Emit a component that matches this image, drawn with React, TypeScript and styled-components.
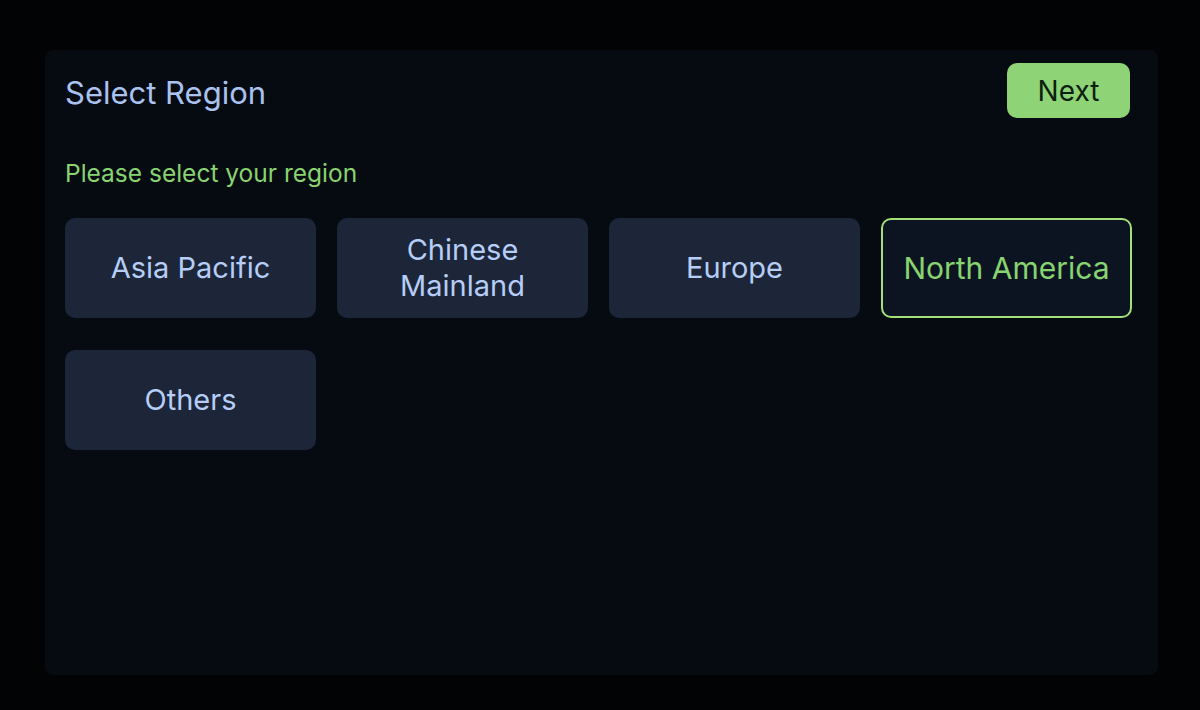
import React, { useState } from "react";
import styled, { createGlobalStyle } from "styled-components";

const GlobalStyle = createGlobalStyle`
  html, body {
    margin: 0;
    padding: 0;
    background: #020305;
  }
  body {
    font-family: Inter, "Noto Sans", sans-serif;
  }
`;

const Frame = styled.div`
  width: 1200px;
  height: 710px;
  box-sizing: border-box;
  padding: 50px 42px 35px 45px;
`;

const Screen = styled.div`
  width: 100%;
  height: 100%;
  box-sizing: border-box;
  background: #060a11;
  border-radius: 8px;
  padding: 13px 26px 0 20px;
`;

const Header = styled.div`
  display: flex;
  align-items: center;
  justify-content: space-between;
  height: 55px;
  padding-right: 2px;
`;

const Title = styled.h1`
  margin: 4px 0 0;
  font-size: 31px;
  font-weight: 400;
  color: #a9c2ef;
`;

const NextButton = styled.button`
  width: 123px;
  height: 55px;
  border: none;
  border-radius: 10px;
  background: #8ed476;
  color: #0d1f10;
  font-family: inherit;
  font-size: 28px;
  font-weight: 400;
  cursor: pointer;
`;

const Subtitle = styled.p`
  margin: 40px 0 0;
  line-height: 30px;
  font-size: 24.5px;
  color: #88d470;
`;

const Grid = styled.div`
  display: grid;
  grid-template-columns: repeat(4, 251px);
  column-gap: 21px;
  row-gap: 32px;
  margin-top: 30px;
`;

const RegionCard = styled.button<{ $selected: boolean }>`
  height: 100px;
  box-sizing: border-box;
  border-radius: 10px;
  border: 2px solid ${({ $selected }) => ($selected ? "#a3e07c" : "transparent")};
  background: ${({ $selected }) => ($selected ? "#0c1422" : "#1c2638")};
  color: ${({ $selected }) => ($selected ? "#88d470" : "#b6cef7")};
  font-family: inherit;
  font-size: ${({ $selected }) => ($selected ? "30px" : "29px")};
  line-height: 36px;
  padding: 0 6px;
  white-space: nowrap;
  cursor: pointer;
`;

const regions = ["Asia Pacific", "Chinese\nMainland", "Europe", "North America", "Others"];

export default function App() {
  const [selected, setSelected] = useState("North America");

  return (
    <>
      <GlobalStyle />
      <Frame>
        <Screen>
          <Header>
            <Title>Select Region</Title>
            <NextButton>Next</NextButton>
          </Header>
          <Subtitle>Please select your region</Subtitle>
          <Grid>
            {regions.map((r) => (
              <RegionCard key={r} $selected={selected === r} onClick={() => setSelected(r)}>
                {r.split("\n").map((line) => (
                  <div key={line}>{line}</div>
                ))}
              </RegionCard>
            ))}
          </Grid>
        </Screen>
      </Frame>
    </>
  );
}
